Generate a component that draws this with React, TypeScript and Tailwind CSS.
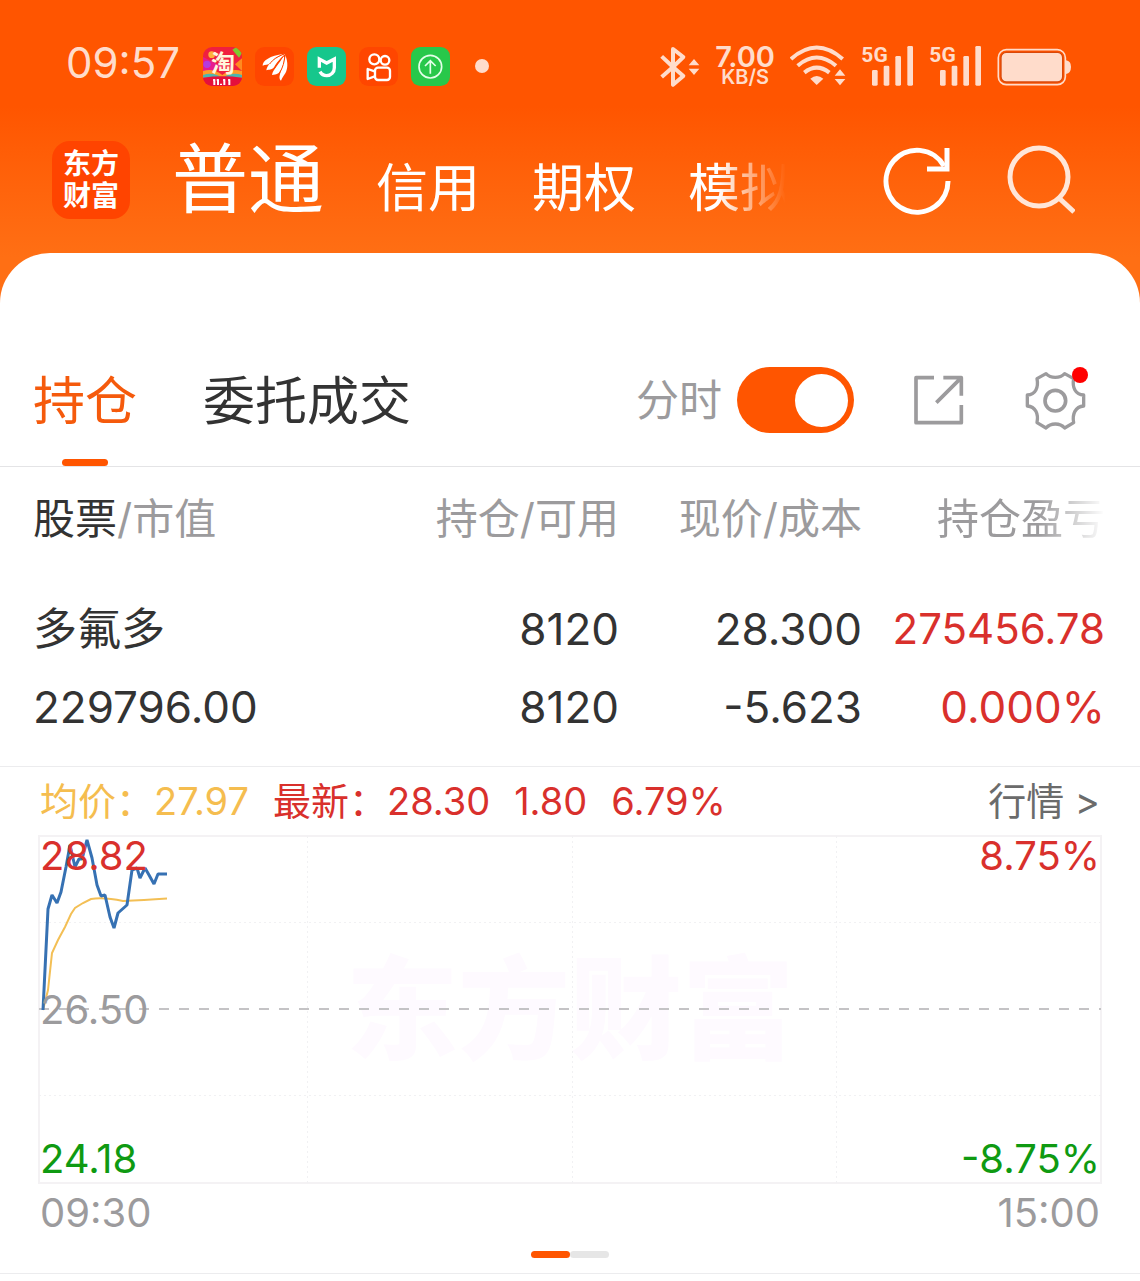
const TaobaoIcon = () => (
  <svg viewBox="0 0 117 117" className="h-[39px] w-[39px]">
    <defs>
      <clipPath id="tb">
        <rect width="117" height="117" rx="28" />
      </clipPath>
    </defs>
    <g clipPath="url(#tb)">
      <rect width="117" height="117" fill="#f0203f" />
      <path d="M0 30L60 60L0 80Z" fill="#e61c8e" />
      <circle cx="12" cy="52" r="11" fill="#b43be0" />
      <circle cx="26" cy="23" r="10" fill="#ffb13b" />
      <path d="M88 8L100 0L117 18L108 32Z" fill="#7ec82e" />
      <path d="M117 34L96 52L117 72Z" fill="#ff8a1f" />
      <path d="M0 72Q30 62 58 84Q86 62 117 72V92H0Z" fill="#ff9b2a" />
      <path d="M0 84Q30 74 58 92Q86 74 117 84V92H0Z" fill="#4cb6b0" />
      <path d="M0 92Q58 84 117 92V117H0Z" fill="#e5103c" />
      <path d="M34 97V114M45 97V114M64 97V114M79 97V114M54 110V114" stroke="#fff" strokeWidth="6" />
      <path d="M30 99H36M41 99H47M60 99H66M75 99H81" stroke="#fff" strokeWidth="4" />
    </g>
    <text x="24" y="76" fontSize="72" fontWeight="700" fill="#fff6dc">
      淘
    </text>
  </svg>
);

const WingIcon = () => (
  <svg viewBox="646 51 117 117" className="h-[39px] w-[39px]">
    <rect x="646" y="51" width="117" height="117" rx="28" fill="#ff4600" />
    <g fill="#fff">
      <path d="M669 107C668 92 690 77 733 71C712 80 700 90 692 100C685 106 676 104 669 107Z" />
      <path d="M680 121C682 104 702 84 737 72C718 88 710 100 703 112C696 121 688 118 680 121Z" />
      <path d="M697 135C700 118 718 104 733 76C734 100 728 118 717 129C710 135 703 133 697 135Z" />
      <path d="M724 152C712 142 728 122 737 76C746 98 744 118 737 130C732 138 728 142 724 152Z" />
    </g>
    <path
      d="M690 102C700 88 712 80 733 72M704 116C712 100 722 88 736 74M719 130C730 112 734 96 736 76"
      fill="none"
      stroke="#ff4600"
      strokeWidth="3"
    />
  </svg>
);

const MiHomeIcon = () => (
  <svg viewBox="802 51 117 117" className="h-[39px] w-[39px]">
    <rect x="802" y="51" width="117" height="117" rx="28" fill="#16c78c" />
    <path
      d="M839 113V87L861 99L884 87V113C884 127 874 137 861 137C852 137 845 132 841 125"
      fill="none"
      stroke="#fff"
      strokeWidth="10"
    />
  </svg>
);

const KuaishouIcon = () => (
  <svg viewBox="958 51 117 117" className="h-[39px] w-[39px]">
    <rect x="958" y="51" width="117" height="117" rx="28" fill="#ff4600" />
    <g fill="none" stroke="#fff" strokeWidth="7" strokeLinejoin="round">
      <circle cx="1004" cy="88" r="15" />
      <circle cx="1036" cy="91" r="13" />
      <rect x="1006" y="113" width="45" height="37" rx="9" />
      <path d="M1005 124L984 117V147L1005 139" />
    </g>
  </svg>
);

const UploadIcon = () => (
  <svg viewBox="1114 51 117 117" className="h-[39px] w-[39px]">
    <rect x="1114" y="51" width="117" height="117" rx="28" fill="#28c84a" />
    <g fill="none" stroke="#e4ffe9" strokeWidth="5">
      <circle cx="1172" cy="110" r="34" />
      <path d="M1172 131V93M1156 108L1172 92L1188 108" />
    </g>
  </svg>
);

const BluetoothIcon = () => (
  <svg viewBox="63 39 120 132" className="h-[44px] w-[40px]">
    <path
      d="M68 76L102 108V54L133 78L102 108L133 135L102 161V108L68 138"
      fill="none"
      stroke="#ffdccb"
      strokeWidth="12"
      strokeLinejoin="round"
    />
    <path d="M165 84L181 103H149ZM165 132L181 113H149Z" fill="#ffdccb" />
  </svg>
);

const WifiIcon = () => (
  <svg viewBox="447 39 168 132" className="h-[44px] w-[56px]">
    <g fill="none" stroke="#ffdccb" strokeWidth="12">
      <path d="M450 84Q527 15 605 84" />
      <path d="M470 104Q527 55 585 104" />
      <path d="M490 125Q527 95 565 125" />
    </g>
    <path d="M508 143Q527 127 547 143L527 162Z" fill="#ffdccb" />
    <path d="M597 115L613 134H581ZM597 163L613 144H581Z" fill="#ffdccb" />
  </svg>
);

const SignalIcon = () => (
  <svg viewBox="657 39 159 132" className="h-[44px] w-[53px]">
    <text x="658" y="94" fontSize="63" fontWeight="700" fill="#ffdccb" fontFamily="Roboto, sans-serif">
      5G
    </text>
    <g fill="#ffdccb">
      <rect x="690" y="117" width="17" height="47" rx="4" />
      <rect x="725" y="104" width="17" height="60" rx="4" />
      <rect x="760" y="75" width="17" height="89" rx="4" />
      <rect x="796" y="45" width="17" height="119" rx="4" />
    </g>
  </svg>
);

const BatteryIcon = () => (
  <svg viewBox="1071 39 225 132" className="h-[44px] w-[75px]">
    <rect x="1075" y="56" width="201" height="105" rx="24" fill="none" stroke="#ffdccb" strokeWidth="5" />
    <rect x="1083" y="64" width="185" height="89" rx="16" fill="#ffdccb" stroke="#d9480a" strokeWidth="4" />
    <path d="M1278 88Q1293 90 1293 108Q1293 126 1278 129Z" fill="#ffdccb" />
  </svg>
);

const RefreshIcon = () => (
  <svg viewBox="0 0 70 70" className="h-[70px] w-[70px]">
    <g fill="none" stroke="#fff" strokeWidth="5">
      <path d="M66 36A31 31 0 1 1 62 21" />
      <path d="M65 3V24H45" />
    </g>
  </svg>
);

const SearchIcon = () => (
  <svg viewBox="0 0 70 70" className="h-[70px] w-[70px]">
    <g fill="none" stroke="#ffe6d8" strokeWidth="5">
      <circle cx="34" cy="32" r="29" />
      <path d="M54 53L69 67" />
    </g>
  </svg>
);

const ShareIcon = () => (
  <svg viewBox="882 75 150 150" className="h-[50px] w-[50px]">
    <g fill="none" stroke="#9c9b9d" strokeWidth="11" strokeLinejoin="round">
      <path d="M942 83H888V218H1024V165" />
      <path d="M970 83H1024V137M1024 83L949 158" />
    </g>
  </svg>
);

const GearIcon = () => (
  <svg viewBox="1215 60 183 183" className="h-[61px] w-[61px]">
    <g fill="none" stroke="#9c9b9d" strokeWidth="10" strokeLinejoin="round">
      <path d="M1278 71C1292 86 1320 86 1334 71L1361 86C1356 112 1366 134 1391 135V168C1366 170 1356 192 1361 218L1334 234C1320 218 1292 218 1278 234L1251 218C1256 192 1247 170 1222 168V135C1247 134 1256 112 1251 86Z" />
      <circle cx="1306" cy="152" r="31" strokeWidth="11" />
    </g>
  </svg>
);

const StatusBar = () => (
  <div className="flex h-[132px] items-center pr-[68px] pl-[66px] text-[#ffdccb]">
    <span className="mb-[6px] w-[137px] text-[42px] leading-[60px]">09:57</span>
    <div className="flex items-center gap-[13px]">
      <TaobaoIcon />
      <WingIcon />
      <MiHomeIcon />
      <KuaishouIcon />
      <UploadIcon />
      <span className="ml-3 h-[14px] w-[14px] rounded-full bg-[#ffdccb]" />
    </div>
    <div className="ml-auto flex items-center gap-[15px]">
      <BluetoothIcon />
      <div className="flex flex-col items-center font-semibold">
        <span className="text-[29px] leading-[22px]">7.00</span>
        <span className="text-[20px] leading-[18px]">KB/S</span>
      </div>
      <WifiIcon />
      <SignalIcon />
      <SignalIcon />
      <BatteryIcon />
    </div>
  </div>
);

const Header = () => (
  <div className="flex h-[121px] items-start pr-[65px] pl-[52px] text-white">
    {/* 标志 */}
    <div className="mt-[9px] flex h-[78px] w-[78px] flex-col items-center justify-center rounded-[18px] bg-[#ff4400] text-[28px] leading-[32px] font-bold">
      <span>东方</span>
      <span>财富</span>
    </div>
    <nav className="mt-[2px] ml-[42px] flex items-baseline gap-[52px] text-[52px] leading-[90px] [mask-image:linear-gradient(to_right,#000_88%,transparent_99%)]">
      <button className="text-[76px]">普通</button>
      <button>信用</button>
      <button>期权</button>
      <button>模拟</button>
    </nav>
    <div className="mt-[13px] ml-auto flex gap-[53px]">
      <button aria-label="刷新">
        <RefreshIcon />
      </button>
      <button aria-label="搜索">
        <SearchIcon />
      </button>
    </div>
  </div>
);

const Tabs = () => (
  <div className="flex h-[214px] items-end border-b border-[#e4e4e6] pr-[54px] pl-[33px]">
    <button className="flex flex-col items-center text-[52px] leading-[60px] text-[#f55a0c]">
      持仓
      <span className="mt-[27px] h-[7px] w-[46px] rounded-full bg-[#ff5500]" />
    </button>
    <button className="mb-[34px] ml-[66px] text-[52px] leading-[60px] text-[#333333]">委托成交</button>
    <div className="mb-[33px] ml-auto flex items-center">
      <label className="flex items-center gap-[15px] text-[43px] leading-[66px] text-[#9c9b9d]">
        分时
        <input type="checkbox" defaultChecked className="peer sr-only" />
        <span className="flex h-[66px] w-[117px] items-center rounded-full bg-[#d0d0d0] px-[6px] peer-checked:justify-end peer-checked:bg-[#ff5500]">
          <span className="h-[53px] w-[53px] rounded-full bg-white" />
        </span>
      </label>
      <button aria-label="分享" className="ml-[60px]">
        <ShareIcon />
      </button>
      <button aria-label="设置" className="relative ml-[61px]">
        <GearIcon />
        <span className="absolute -top-[3px] -right-[2px] h-4 w-4 rounded-full bg-[#ff0000]" />
      </button>
    </div>
  </div>
);

const Positions = () => (
  <div className="border-b border-[#ececee] pr-[35px] pb-[20px] pl-[33px]">
    <table className="w-full table-fixed text-right text-[44px] leading-[78px] text-[#333333]">
      <thead className="text-[42px] text-[#9c9b9d]">
        <tr className="h-[104px]">
          <th className="text-left font-[390]">
            <span className="text-[#333333]">股票</span>/市值
          </th>
          <th className="w-[243px] font-[390]">持仓/可用</th>
          <th className="w-[243px] font-[390]">现价/成本</th>
          <th className="w-[243px] font-[390]">
            <span className="[mask-image:linear-gradient(to_right,#000_60%,transparent_100%)]">持仓盈亏</span>
          </th>
        </tr>
      </thead>
      <tbody>
        <tr>
          <td className="pt-[19px] text-left">多氟多</td>
          <td className="pt-[19px]">8120</td>
          <td className="pt-[19px]">28.300</td>
          <td className="pt-[19px] text-[42px] text-[#d9302c]">275456.78</td>
        </tr>
        <tr>
          <td className="text-left">229796.00</td>
          <td>8120</td>
          <td>-5.623</td>
          <td className="text-[#d9302c]">0.000%</td>
        </tr>
      </tbody>
    </table>
  </div>
);

const price =
  "5,175 10,74 14,60 19,68 23,57 28,32 32,10 37,32 41,24 44,24 49,5 54,23 59,50 63,61 67,60 72,82 76,93 80,78 89,70 94,35 99,33 102,43 107,33 111,40 116,49 120,39 129,39";
const average = "M5 175L10 155L14 118L20 105L27 92L33 79L37 73L45 68L53 64Q66 62 85 66Q105 65 129 63.5";

const Chart = () => (
  <section className="px-[38px]">
    <div className="flex h-[68px] items-center text-[38px] leading-[60px] text-[#d9302c]">
      <span className="ml-[2px] text-[#f5bd4f]">均价：27.97</span>
      <span className="ml-[24px]">最新：28.30</span>
      <span className="ml-[24px]">1.80</span>
      <span className="ml-[24px]">6.79%</span>
      <a href="#" className="mr-[2px] ml-auto text-[#6b6b6b]">
        行情 &gt;
      </a>
    </div>
    <div className="relative text-[40px] leading-[42px]">
      <div className="absolute inset-0 flex items-center justify-center text-[112px] font-black text-[#fefaff]">
        东方财富
      </div>
      <svg viewBox="0 0 1064 349" className="relative w-full">
        <rect x="1" y="1" width="1062" height="347" fill="none" stroke="#f4f2f4" strokeWidth="2" />
        <g stroke="#f1f1f3" strokeDasharray="2 3">
          <path d="M269.5 1V348M534.5 1V348M798.5 1V348" />
          <path d="M1 87.5H1063M1 260.5H1063" />
        </g>
        <path d="M1 174H1063" stroke="#c4c3c5" strokeWidth="2" strokeDasharray="10 10" />
        <path d={average} fill="none" stroke="#f3bf55" strokeWidth="2" />
        <polyline points={price} fill="none" stroke="#3671b3" strokeWidth="3" strokeLinejoin="bevel" />
      </svg>
      <span className="absolute top-0 left-[2px] text-[#d9302c]">28.82</span>
      <span className="absolute top-0 right-[2px] text-[#d9302c]">8.75%</span>
      <span className="absolute top-1/2 left-[2px] -translate-y-1/2 text-[#9c9b9d]">26.50</span>
      <span className="absolute bottom-1 left-[2px] text-[#0f9a12]">24.18</span>
      <span className="absolute right-[2px] bottom-1 text-[#0f9a12]">-8.75%</span>
    </div>
    <div className="flex h-[58px] items-center justify-between px-[2px] text-[40px] leading-[58px] text-[#9c9b9d]">
      <span>09:30</span>
      <span>15:00</span>
    </div>
  </section>
);

export default function App() {
  return (
    <div className="min-h-screen bg-white font-['Inter','Noto_Sans_CJK_SC',sans-serif] font-[390]">
      <header className="bg-linear-to-b from-[#ff5500] from-35% to-[#ff6f14] to-85%">
        <StatusBar />
        <Header />
        <div className="h-[50px] rounded-t-[50px] bg-white" />
      </header>
      <main className="-mt-[50px]">
        <Tabs />
        <Positions />
        <Chart />
        {/* 分页指示 */}
        <div className="flex justify-center border-b border-[#ececee] pt-[9px] pb-[15px]">
          <span className="h-[7px] w-[39px] rounded-full bg-[#ff5500]" />
          <span className="h-[7px] w-[39px] rounded-full bg-[#e6e6e6]" />
        </div>
      </main>
    </div>
  );
}
